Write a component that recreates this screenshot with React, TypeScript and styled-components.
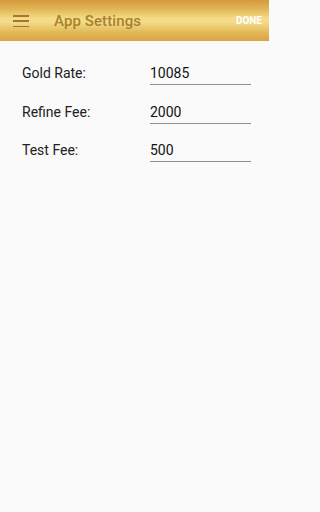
import React from "react";
import styled, { createGlobalStyle } from "styled-components";

const Global = createGlobalStyle`
  html, body { margin: 0; padding: 0; background: #fafafa; }
  body { font-family: Roboto, "Noto Sans", Arial, sans-serif; }
  * { box-sizing: border-box; }
`;

const Page = styled.div`
  width: 100%;
  max-width: 269px;
  min-height: 512px;
  background: #fafafa;
`;

const Toolbar = styled.header`
  height: 41px;
  display: flex;
  align-items: center;
  padding: 0 7px 0 13px;
  background: linear-gradient(
    to bottom,
    #d49a3c 0%,
    #e2b556 22%,
    #f4dc88 45%,
    #f3da86 55%,
    #e3b95a 78%,
    #d8a446 100%
  );
`;

const MenuButton = styled.div`
  width: 16px;
  height: 12px;
  display: flex;
  flex-direction: column;
  justify-content: space-between;
  margin-top: 1px;
  span {
    display: block;
    height: 1.5px;
    background: #a2782c;
  }
`;

const Title = styled.h1`
  margin: 0 0 0 25px;
  flex: 1;
  font-size: 15px;
  font-weight: 500;
  color: #a8822f;
  letter-spacing: 0.1px;
`;

const Done = styled.button`
  border: none;
  background: none;
  padding: 0;
  font-family: Roboto, Arial, sans-serif;
  font-size: 10px;
  font-weight: 700;
  color: #ffffff;
  margin-top: -1px;
`;

const Form = styled.div`
  display: flex;
  flex-direction: column;
  gap: 17.5px;
  padding: 23px 18px 0 22px;
`;

const Row = styled.div`
  display: grid;
  grid-template-columns: 128px 1fr;
  align-items: baseline;
`;

const Label = styled.span`
  font-size: 14px;
  line-height: 19px;
  color: #212121;
`;

const Field = styled.div`
  border-bottom: 1px solid #8f8f8f;
  font-size: 14px;
  line-height: 19px;
  color: #111;
  padding: 0 0 1px 0;
`;

const rows = [
  { label: "Gold Rate:", value: "10085" },
  { label: "Refine Fee:", value: "2000" },
  { label: "Test Fee:", value: "500" },
];

export default function App() {
  return (
    <Page>
      <Global />
      <Toolbar>
        <MenuButton>
          <span />
          <span />
          <span />
        </MenuButton>
        <Title>App Settings</Title>
        <Done>DONE</Done>
      </Toolbar>
      <Form>
        {rows.map((r) => (
          <Row key={r.label}>
            <Label>{r.label}</Label>
            <Field>{r.value}</Field>
          </Row>
        ))}
      </Form>
    </Page>
  );
}
